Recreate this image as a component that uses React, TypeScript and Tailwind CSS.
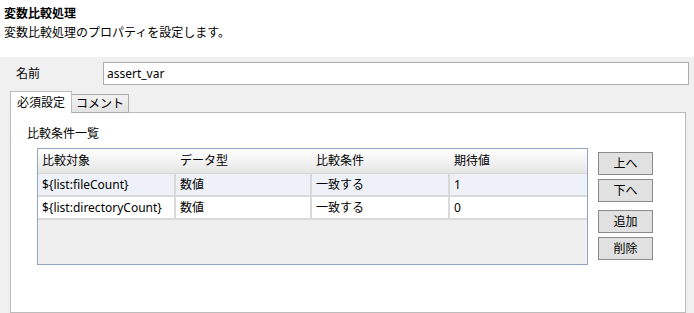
import React from "react";

const font = { fontFamily: '"Noto Sans", "Noto Sans CJK JP", sans-serif' };

const rows = [
  { target: "${list:fileCount}", type: "数値", cond: "一致する", val: "1" },
  { target: "${list:directoryCount}", type: "数値", cond: "一致する", val: "0" },
];

function Btn({ label, className = "" }: { label: string; className?: string }) {
  return (
    <div
      className={`w-[55px] h-[23px] border border-[#8a8a8a] bg-[#e1e1e1] flex items-center justify-center text-[12px] text-black ${className}`}
    >
      {label}
    </div>
  );
}

export default function App() {
  return (
    <div
      className="w-[694px] h-[313px] bg-white overflow-hidden flex flex-col text-[12px] text-black"
      style={font}
    >
      <div className="h-[57px] px-[4px] pt-[6px] shrink-0">
        <div className="h-[16px] leading-[16px] font-bold">変数比較処理</div>
        <div className="h-[16px] leading-[16px] mt-[3px]">変数比較処理のプロパティを設定します。</div>
      </div>
      <div className="flex-1 bg-[#f0f0f0] flex flex-col pl-[10px] pr-[5px] min-h-0">
        <div className="flex items-center pt-[5px] h-[28px]">
          <div className="w-[93px] pl-[6px] leading-[16px]">名前</div>
          <div className="flex-1 h-[23px] border border-[#acacac] bg-white flex items-center px-[3px]">
            assert_var
          </div>
        </div>
        <div className="flex items-end mt-[6px] h-[22px] relative z-10">
          <div className="w-[62px] h-[22px] border border-b-0 border-[#bcbcbc] bg-white flex items-center justify-center">
            必須設定
          </div>
          <div className="w-[57px] h-[19px] border border-l-0 border-[#acacac] bg-gradient-to-b from-[#f2f2f2] to-[#e3e3e3] flex items-center justify-center">
            コメント
          </div>
        </div>
        <div className="flex-1 w-[676px] -mt-[1px] border border-[#bcbcbc] bg-white pl-[16px] pt-[12px]">
          <div className="h-[18px] leading-[18px]">比較条件一覧</div>
          <div className="flex mt-[5px] pl-[10px]">
            <div className="w-[551px] h-[117px] border border-[#8fa5c2] bg-[#efefef] flex flex-col">
              <div className="h-[25px] flex bg-gradient-to-b from-[#ffffff] to-[#e6e6e6] border-b border-[#d6d6d6]">
                <div className="w-[138px] pl-[4px] flex items-center">比較対象</div>
                <div className="w-[136px] pl-[4px] flex items-center">データ型</div>
                <div className="w-[138px] pl-[4px] flex items-center">比較条件</div>
                <div className="flex-1 pl-[4px] flex items-center">期待値</div>
              </div>
              {rows.map((r, i) => (
                <div
                  key={i}
                  className={`h-[23px] flex border-b-2 border-[#d9d9d9] ${i === 0 ? "bg-[#eef2f8]" : "bg-white"}`}
                >
                  <div className="w-[138px] pl-[4px] flex items-center border-r-2 border-[#d9d9d9]">{r.target}</div>
                  <div className="w-[136px] pl-[4px] flex items-center border-r-2 border-[#d9d9d9]">{r.type}</div>
                  <div className="w-[138px] pl-[4px] flex items-center border-r-2 border-[#d9d9d9]">{r.cond}</div>
                  <div className="flex-1 pl-[4px] flex items-center">{r.val}</div>
                </div>
              ))}
            </div>
            <div className="flex flex-col ml-[10px] mt-[4px]">
              <Btn label="上へ" />
              <Btn label="下へ" className="mt-[4px]" />
              <Btn label="追加" className="mt-[8px]" />
              <Btn label="削除" className="mt-[4px]" />
            </div>
          </div>
        </div>
      </div>
    </div>
  );
}
